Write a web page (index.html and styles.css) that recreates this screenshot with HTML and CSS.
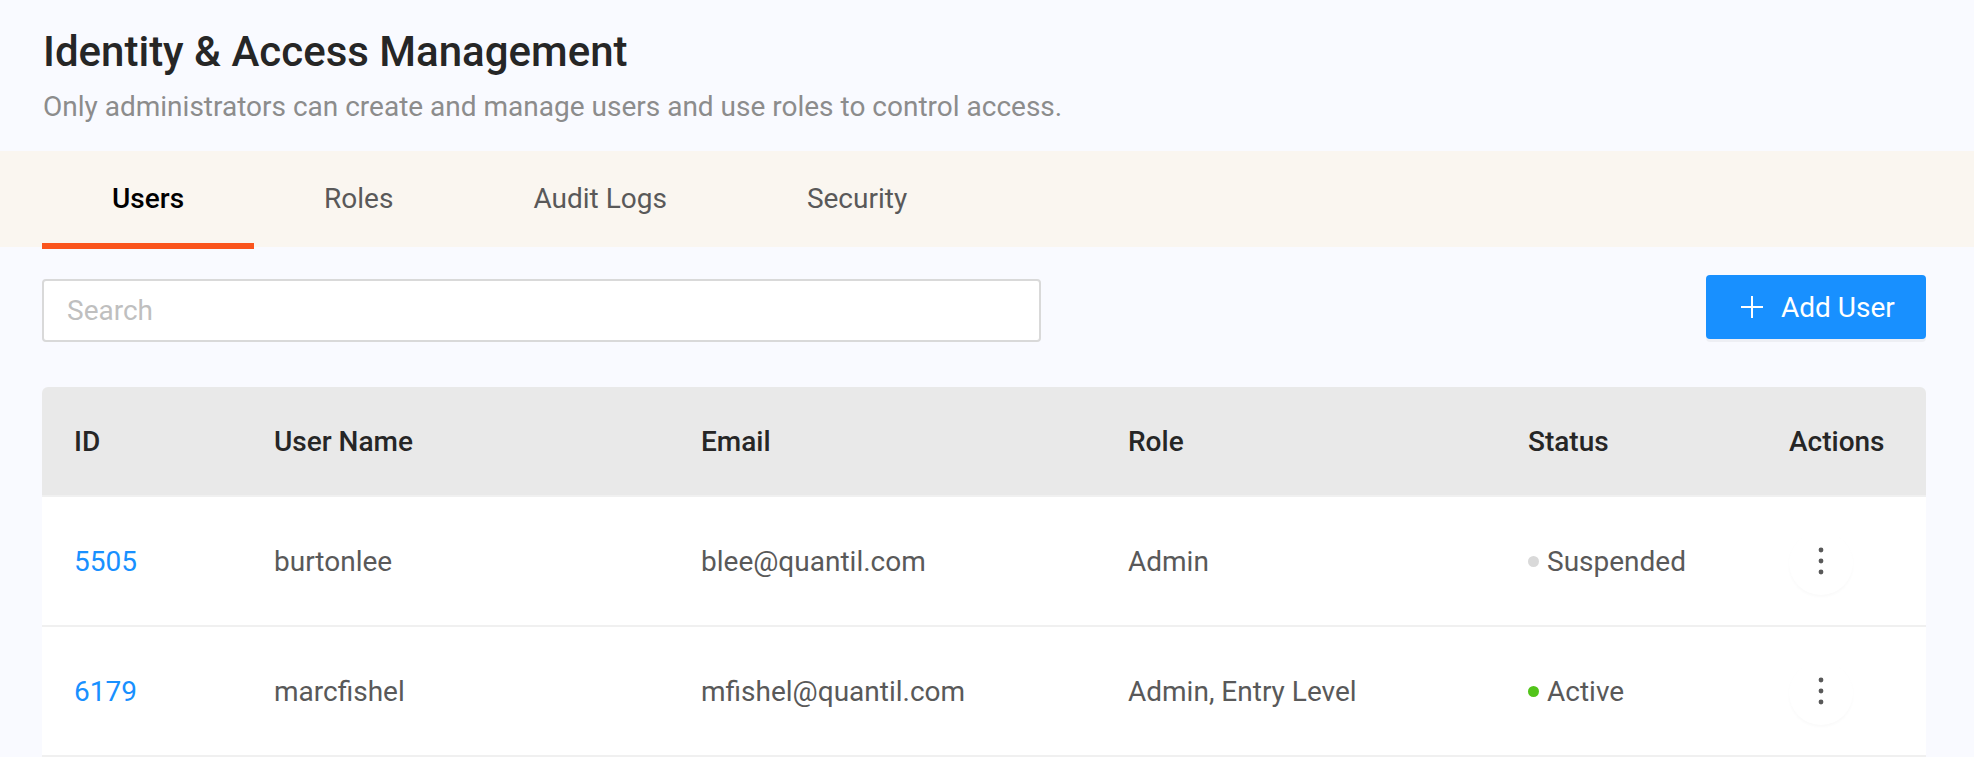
FILE: index.html
```html
<!DOCTYPE html>
<html lang="en">
<head>
<meta charset="utf-8">
<title>Identity &amp; Access Management</title>
<link rel="stylesheet" href="styles.css">
</head>
<body>
<div class="page">
  <header class="page-header">
    <h1 class="title">Identity &amp; Access Management</h1>
    <p class="subtitle">Only administrators can create and manage users and use roles to control access.</p>
  </header>

  <nav class="tabs">
    <div class="tab active">Users</div>
    <div class="tab">Roles</div>
    <div class="tab">Audit Logs</div>
    <div class="tab">Security</div>
  </nav>

  <main class="content">
    <div class="toolbar">
      <div class="search"><span class="placeholder">Search</span></div>
      <button class="btn-primary">
        <svg class="plus" viewBox="0 0 22 22" width="22" height="22"><path d="M11 0v22M0 11h22" stroke="#fff" stroke-width="2" fill="none"/></svg>
        <span>Add User</span>
      </button>
    </div>

    <div class="table">
      <div class="row head">
        <div class="cell">ID</div>
        <div class="cell">User Name</div>
        <div class="cell">Email</div>
        <div class="cell">Role</div>
        <div class="cell">Status</div>
        <div class="cell">Actions</div>
      </div>
      <div class="row">
        <div class="cell"><a class="link">5505</a></div>
        <div class="cell">burtonlee</div>
        <div class="cell">blee@quantil.com</div>
        <div class="cell">Admin</div>
        <div class="cell"><span class="dot dot-suspended"></span>Suspended</div>
        <div class="cell"><span class="kebab"><svg viewBox="0 0 6 28" width="6" height="28"><circle cx="3" cy="3" r="2.4" fill="#595959"/><circle cx="3" cy="14" r="2.4" fill="#595959"/><circle cx="3" cy="25" r="2.4" fill="#595959"/></svg></span></div>
      </div>
      <div class="row">
        <div class="cell"><a class="link">6179</a></div>
        <div class="cell">marcfishel</div>
        <div class="cell">mfishel@quantil.com</div>
        <div class="cell">Admin, Entry Level</div>
        <div class="cell"><span class="dot dot-active"></span>Active</div>
        <div class="cell"><span class="kebab"><svg viewBox="0 0 6 28" width="6" height="28"><circle cx="3" cy="3" r="2.4" fill="#595959"/><circle cx="3" cy="14" r="2.4" fill="#595959"/><circle cx="3" cy="25" r="2.4" fill="#595959"/></svg></span></div>
      </div>
    </div>
  </main>
</div>
</body>
</html>
```

FILE: styles.css
```css
* { box-sizing: border-box; }

html, body {
  margin: 0;
  padding: 0;
  background: #f9faff;
  font-family: Roboto, "Liberation Sans", Arial, sans-serif;
  overflow: hidden;
}

.page {
  width: 1974px;
  height: 757px;
}

.page-header {
  padding: 27px 48px 0 43px;
}

.title {
  margin: 0;
  font-size: 42px;
  line-height: 50px;
  font-weight: 500;
  color: #262626;
}

.subtitle {
  margin: 13px 0 0;
  font-size: 28px;
  line-height: 34px;
  font-weight: 400;
  color: #8c8c8c;
}

.tabs {
  margin-top: 27px;
  height: 96px;
  background: #faf6f0;
  display: flex;
  padding-left: 42px;
}

.tab {
  height: 98px;
  padding: 0 70px;
  display: flex;
  align-items: center;
  font-size: 28px;
  color: #595959;
  border-bottom: 6px solid transparent;
  padding-top: 2px;
}

.tab.active {
  color: #000;
  font-weight: 500;
  border-bottom-color: #fa541c;
}

.content {
  padding: 28px 48px 0 42px;
}

.toolbar {
  display: flex;
  justify-content: space-between;
  align-items: flex-start;
}

.search {
  margin-top: 4px;
  width: 999px;
  height: 63px;
  background: #fff;
  border: 2px solid #d9d9d9;
  border-radius: 4px;
  padding-left: 23px;
  display: flex;
  align-items: center;
}

.placeholder {
  font-size: 28px;
  color: #bfbfbf;
}

.btn-primary {
  height: 64px;
  width: 220px;
  border: 0;
  border-radius: 4px;
  background: #1890ff;
  color: #fff;
  font-family: inherit;
  font-size: 28px;
  display: flex;
  align-items: center;
  padding: 0 0 0 35px;
  gap: 18px;
  box-shadow: 0 3px 0 rgba(0, 0, 0, 0.045);
}

.plus { display: block; }

.table {
  margin-top: 45px;
  border-radius: 6px 6px 0 0;
  overflow: hidden;
}

.row {
  display: grid;
  grid-template-columns: 200px 427px 427px 400px 261px 1fr;
  height: 130px;
  background: #fff;
  border-bottom: 2px solid #f0f0f0;
  align-items: center;
}

.row.head {
  height: 110px;
  background: #e9e9e9;
}

.cell {
  padding: 0 32px;
  font-size: 28px;
  color: #595959;
  display: flex;
  align-items: center;
  white-space: nowrap;
}

.head .cell {
  color: #262626;
  font-weight: 500;
}

.link {
  color: #1890ff;
  text-decoration: none;
}

.dot {
  width: 11px;
  height: 11px;
  border-radius: 50%;
  margin-right: 8px;
  display: inline-block;
}

.dot-suspended { background: #d9d9d9; }
.dot-active { background: #52c41a; }

.kebab {
  width: 64px;
  height: 64px;
  border-radius: 50%;
  background: #fff;
  box-shadow: 0 2px 3px rgba(0, 0, 0, 0.025);
  display: flex;
  align-items: center;
  justify-content: center;
  margin-top: 4px;
}

.kebab svg { display: block; margin-top: -4px; }
```
